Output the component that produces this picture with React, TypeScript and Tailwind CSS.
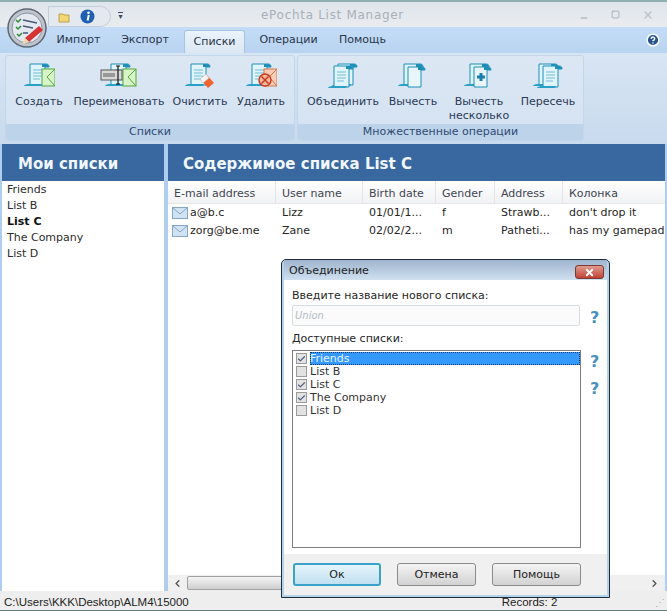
import { Check, X, Minus, Square, HelpCircle, ChevronLeft, ChevronRight } from "lucide-react";

const tabs = [
  { name: "Импорт", width: "w-[63px]" },
  { name: "Экспорт", width: "w-[70px]" },
  { name: "Списки", width: "ml-[4px] mr-[3px] w-[61px]", active: true },
  { name: "Операции", width: "w-[81px]" },
  { name: "Помощь", width: "w-[67px]" },
];
const myLists = ["Friends", "List B", "List C", "The Company", "List D"];
const columns = ["E-mail address", "User name", "Birth date", "Gender", "Address", "Колонка"];
const rows = [
  ["a@b.c", "Lizz", "01/01/1...", "f", "Strawb...", "don't drop it"],
  ["zorg@be.me", "Zane", "02/02/2...", "m", "Patheti...", "has my gamepad"],
];
const dialogLists = [
  { name: "Friends", on: true },
  { name: "List B", on: false },
  { name: "List C", on: true },
  { name: "The Company", on: true },
  { name: "List D", on: false },
];

function Scroll({ x = 0, y = 0, lines = true }: { x?: number; y?: number; lines?: boolean }) {
  return (
    <g transform={`translate(${x} ${y})`}>
      <path d="M7 2h16c2 0 3 1 3 3h-4v18H7z" fill="#dff4fb" stroke="#1f8fb8" strokeWidth="1" />
      <path d="M1 24h17c1 0 2-1 2-2H5c-2 0-4 1-4 2z" fill="#2aa0c8" />
      <path d="M19 2h4c2 0 3 1 3 3h-7z" fill="#1f8fb8" />
      {lines && <path d="M10 8h9M10 11h9M10 14h9M10 17h7" stroke="#74bcd4" strokeWidth="1" />}
    </g>
  );
}

function Envelope({ fill = "#d8f3c8", stroke = "#52a83c" }: { fill?: string; stroke?: string }) {
  return (
    <g>
      <rect x="19" y="7" width="13" height="17" fill={fill} stroke={stroke} />
      <path d="M32 7l-8 8 8 9" fill="none" stroke={stroke} />
    </g>
  );
}

function RibbonIcon({ kind }: { kind: string }) {
  const wide = kind === "rename";
  return (
    <svg width={wide ? 38 : 32} height="28" viewBox={wide ? "0 0 38 28" : "0 0 32 28"}>
      {kind === "create" && (
        <>
          <Scroll />
          <Envelope />
        </>
      )}
      {kind === "rename" && (
        <>
          <Scroll x={4} />
          <g transform="translate(4 0)">
            <Envelope />
          </g>
          <rect x="1" y="8" width="21" height="10" fill="#d8d8d8" stroke="#555" />
          <rect x="3" y="11" width="12" height="4" fill="#999" />
          <path d="M16 4h4M18 4v18M16 22h4" stroke="#111" strokeWidth="1.2" fill="none" />
        </>
      )}
      {kind === "clear" && (
        <>
          <Scroll />
          <path d="M16 17l6-5 8 9-6 5z" fill="#f0622e" />
          <path d="M16 17l6-5 3 4-6 5z" fill="#f4f4f4" stroke="#bbb" strokeWidth="0.5" />
        </>
      )}
      {kind === "delete" && (
        <>
          <Scroll />
          <Envelope fill="#f8cdb8" stroke="#d8744a" />
          <circle cx="20" cy="18" r="6" fill="#f3b9a0" stroke="#c83c1e" strokeWidth="1.5" />
          <path d="M16.5 14.5l7 7M23.5 14.5l-7 7" stroke="#c83c1e" strokeWidth="1.5" />
        </>
      )}
      {kind === "union" && (
        <>
          <Scroll x={4} lines={false} />
          <Scroll y={2} />
        </>
      )}
      {kind === "minus" && (
        <>
          <Scroll lines={false} />
          <path d="M11 5h14c2 0 3 1 3 3h-4v17H11z" fill="#e8f6fb" stroke="#1f8fb8" />
          <path d="M21 5h4c2 0 3 1 3 3h-7z" fill="#1f8fb8" />
        </>
      )}
      {kind === "minusMany" && (
        <>
          <Scroll lines={false} />
          <path d="M11 5h14c2 0 3 1 3 3h-4v17H11z" fill="#e8f6fb" stroke="#1f8fb8" />
          <path d="M21 5h4c2 0 3 1 3 3h-7z" fill="#1f8fb8" />
          <path d="M14 15h8M18 11v8" stroke="#1c7fb0" strokeWidth="3" />
        </>
      )}
      {kind === "intersect" && (
        <>
          <Scroll lines={false} />
          <Scroll x={4} y={2} />
        </>
      )}
    </svg>
  );
}

function RibbonButton({ kind, label, width }: { kind: string; label: string; width: string }) {
  return (
    <div className={`flex shrink-0 flex-col items-center pt-[6px] text-center leading-[14px] ${width}`}>
      <RibbonIcon kind={kind} />
      <div className="mt-[5px] whitespace-pre-line">{label}</div>
    </div>
  );
}

function RibbonGroup({ title, width, children }: { title: string; width: string; children: React.ReactNode }) {
  return (
    <div className={`flex h-[86px] shrink-0 flex-col overflow-hidden rounded-[3px] border border-[#c3d6ea] bg-gradient-to-b from-[#dce7f3] to-[#d3e2f2] ${width}`}>
      <div className="flex h-[68px] items-start">{children}</div>
      <div className="flex h-[16px] items-center justify-center bg-[#bdd3ea] pt-[1px] text-[#2f4a72]">{title}</div>
    </div>
  );
}

function AppOrb() {
  return (
    <svg width="40" height="40" viewBox="0 0 40 40" className="absolute left-[7px] top-[8px]">
      <circle cx="20" cy="20" r="19" fill="#bfc4cc" stroke="#5f6876" strokeWidth="1.5" />
      <circle cx="20" cy="20" r="15" fill="#e4e8f0" stroke="#8d96a4" />
      <path d="M9 12l2 2 3-3M9 19l2 2 3-3M10 26l2 2 3-3" stroke="#2f8a3a" strokeWidth="1.5" fill="none" />
      <path d="M16 12l14 3M16 18l10 2M16 25h5" stroke="#4a5a78" strokeWidth="1.5" />
      <path d="M18 30l14-12 4 4-14 12z" fill="#d43434" />
      <path d="M18 30l-3 6 7-2z" fill="#f0d8b0" />
    </svg>
  );
}

function HelpMark() {
  return <span className="block h-[16px] text-[16px] font-bold leading-[16px] text-[#4a90bd]">?</span>;
}

function Dialog() {
  return (
    <div className="absolute left-[281px] top-[259px] flex h-[339px] w-[329px] flex-col rounded-t-[5px] border border-[#1f2d3a] bg-[#b4d2ea] px-[2px] pb-[2px]">
      <div className="flex h-[20px] shrink-0 items-center justify-between bg-gradient-to-b from-[#9fb4ce] to-[#cfe0f0] pl-[5px] pt-[2px] text-[#1e1e1e]">
        <span className="text-[11px]">Объединение</span>
        <div className="mr-[3px] mt-[2px] flex h-[14px] w-[29px] items-center justify-center rounded-[3px] border border-[#7a3a34] bg-gradient-to-b from-[#e09a90] to-[#bf4034]">
          <X size={11} strokeWidth={4} className="text-white" />
        </div>
      </div>
      <div className="flex min-h-0 flex-1 flex-col bg-[#f0f0f0]">
        <div className="flex-1 bg-white px-[8px] pt-[9px]">
          <div className="h-[14px] leading-[14px]">Введите название нового списка:</div>
          <div className="mt-[2px] flex items-center gap-[10px]">
            <div className="flex h-[21px] w-[288px] shrink-0 items-center rounded-[2px] border border-[#d8dde2] bg-[#fbfbfb] pl-[2px] text-[10px] italic text-[#b6bcc4]">Union</div>
            <div className="pt-[4px]">
              <HelpMark />
            </div>
          </div>
          <div className="mt-[6px] h-[14px] leading-[14px]">Доступные списки:</div>
          <div className="mt-[4px] flex gap-[9px]">
            <div className="h-[198px] w-[289px] shrink-0 border border-[#7e7e7e] bg-white pl-[1px] pt-[1px] leading-[13px]">
              {dialogLists.map((item, i) => (
                <div key={item.name} className="flex h-[13px] items-center">
                  <span className="ml-[2px] mr-[3px] flex h-[11px] w-[11px] shrink-0 items-center justify-center border border-[#9a9a9a] bg-[#e2e2e2]">
                    {item.on && <Check size={10} strokeWidth={3} className="text-[#4a5a78]" />}
                  </span>
                  <span className={i === 0 ? "h-[13px] flex-1 bg-[#3399ff] text-[#e8f4ff] outline-1 -outline-offset-1 outline-dotted outline-[#0b3a6a]" : "text-[#333]"}>
                    {item.name}
                  </span>
                </div>
              ))}
            </div>
            <div className="flex flex-col pt-[4px]">
              <HelpMark />
              <div className="mt-[11px]">
                <HelpMark />
              </div>
            </div>
          </div>
        </div>
        <div className="flex h-[41px] shrink-0 items-start gap-[16px] bg-[#f0f0f0] pl-[9px] pt-[9px]">
          <button className="h-[23px] w-[88px] rounded-[3px] border-2 border-[#3aa2c8] bg-gradient-to-b from-[#e6f5fc] to-[#c0e0f0] pt-[2px] text-[#222]">Ок</button>
          <button className="h-[23px] w-[79px] rounded-[3px] border border-[#8a8a8a] bg-gradient-to-b from-[#f4f4f4] to-[#d2d2d2] pt-[2px] text-[#222]">Отмена</button>
          <button className="h-[23px] w-[89px] rounded-[3px] border border-[#8a8a8a] bg-gradient-to-b from-[#f4f4f4] to-[#d2d2d2] pt-[2px] text-[#222]">Помощь</button>
        </div>
      </div>
    </div>
  );
}

export default function App() {
  return (
    <div className="relative flex h-[611px] w-[667px] flex-col overflow-hidden bg-[#aecdef] font-['DejaVu_Sans',sans-serif] text-[11px] text-[#262626]">
      <div className="flex h-[27px] shrink-0 items-center border-t-2 border-[#8fb0b0] bg-gradient-to-b from-[#dfe5ec] to-[#e9ecef]">
        <div className="ml-[48px] mt-[4px] flex h-[21px] w-[63px] items-center gap-[9px] rounded-r-full border border-[#c2cedb] bg-[#e4e9f0] pl-[9px]">
          <svg width="13" height="12" viewBox="0 0 13 12">
            <path d="M1 3h4l1 1h5v7H1z" fill="#f2d774" stroke="#b08f32" strokeWidth="0.8" />
          </svg>
          <svg width="15" height="15" viewBox="0 0 15 15">
            <circle cx="7.5" cy="7.5" r="7" fill="#1f5fb0" />
            <circle cx="8.5" cy="3.8" r="1.3" fill="#fff" />
            <path d="M8.8 6L7.6 11.5" stroke="#fff" strokeWidth="2" />
          </svg>
        </div>
        <div className="ml-[6px] mt-[3px] flex w-[7px] flex-col items-center">
          <div className="h-px w-[5px] bg-[#3a4a60]" />
          <span className="text-[8px] leading-[8px] text-[#3a4a60]">▾</span>
        </div>
        <div className="flex-1 pr-[38px] text-center text-[12px] tracking-[0.7px] text-[#a9b0b8]">ePochta List Manager</div>
        <div className="mr-[13px] flex items-center gap-[22px] text-[#9aa6b0]">
          <Minus size={10} strokeWidth={2.5} className="mt-[6px]" />
          <Square size={9} strokeWidth={2} />
          <X size={12} strokeWidth={2.5} className="text-[#b8c0c8]" />
        </div>
      </div>

      <div className="flex h-[26px] shrink-0 items-end justify-between bg-gradient-to-b from-[#c4dcf7] to-[#b9d3f0] pl-[47px] pr-[7px]">
        <div className="flex h-[25px] items-center text-[#27354a]">
          {tabs.map((tab) => (
            <div
              key={tab.name}
              className={
                tab.active
                  ? `flex h-[23px] items-center justify-center self-end rounded-t-[3px] border border-b-0 border-[#a5c4e2] bg-gradient-to-b from-[#eaf3fb] to-[#dce7f3] ${tab.width}`
                  : `text-center ${tab.width}`
              }
            >
              {tab.name}
            </div>
          ))}
        </div>
        <HelpCircle size={14} fill="#27548f" strokeWidth={2.5} className="mb-[6px] text-white" />
      </div>

      <div className="flex h-[91px] shrink-0 gap-[2px] bg-gradient-to-b from-[#d8e5f3] to-[#c8daee] pl-[5px] pt-[2px] text-[#2b3a55]">
        <RibbonGroup title="Списки" width="w-[290px]">
          <RibbonButton kind="create" label="Создать" width="w-[66px]" />
          <RibbonButton kind="rename" label="Переименовать" width="w-[94px]" />
          <RibbonButton kind="clear" label="Очистить" width="w-[68px]" />
          <RibbonButton kind="delete" label="Удалить" width="w-[54px]" />
        </RibbonGroup>
        <RibbonGroup title="Множественные операции" width="w-[287px]">
          <RibbonButton kind="union" label="Объединить" width="w-[90px]" />
          <RibbonButton kind="minus" label="Вычесть" width="w-[50px]" />
          <RibbonButton kind="minusMany" label={"Вычесть\nнесколько"} width="w-[82px]" />
          <RibbonButton kind="intersect" label="Пересечь" width="w-[56px]" />
        </RibbonGroup>
      </div>

      <div className="flex min-h-0 flex-1 gap-[4px] px-[2px]">
        <div className="flex w-[162px] shrink-0 flex-col bg-white">
          <div className="flex h-[37px] shrink-0 items-center bg-[#38689f] pl-[16px] pt-[3px] text-[15px] font-bold text-[#f0f6fc]">Мои списки</div>
          <div className="pl-[5px] pt-[1px] text-[#2c2c2c]">
            {myLists.map((name) => (
              <div key={name} className={name === "List C" ? "h-[16px] font-bold leading-[16px] text-[#111]" : "h-[16px] leading-[16px]"}>
                {name}
              </div>
            ))}
          </div>
        </div>

        <div className="flex min-w-0 flex-1 flex-col overflow-hidden bg-white">
          <div className="flex h-[37px] shrink-0 items-center bg-[#38689f] pl-[15px] pt-[3px] text-[15px] font-bold text-[#f0f6fc]">Содержимое списка List C</div>
          <div className="grid h-[23px] shrink-0 grid-cols-[108px_87px_73px_59px_68px_1fr] border-b border-[#e6e6e6] bg-gradient-to-b from-white to-[#f1f2f4] text-[#3e4652]">
            {columns.map((col) => (
              <div key={col} className="flex items-center border-r border-[#e4e4e4] pl-[6px] pt-[4px] last:border-r-0">{col}</div>
            ))}
          </div>
          <div className="min-h-0 flex-1">
            {rows.map((row) => (
              <div key={row[0]} className="grid h-[18px] grid-cols-[108px_87px_73px_59px_68px_1fr] items-center">
                {row.map((cell, i) => (
                  <div key={i} className={i === 0 ? "flex items-center gap-[2px] pl-[4px]" : "overflow-hidden whitespace-nowrap pl-[6px]"}>
                    {i === 0 && (
                      <svg width="16" height="12" viewBox="0 0 16 12">
                        <rect x="0.5" y="0.5" width="15" height="11" fill="#cfe3f5" stroke="#86a6c4" />
                        <path d="M1 1l7 6 7-6" fill="none" stroke="#86a6c4" />
                      </svg>
                    )}
                    {cell}
                  </div>
                ))}
              </div>
            ))}
          </div>
          <div className="flex h-[16px] shrink-0 items-center bg-[#f0f0f0]">
            <ChevronLeft size={11} strokeWidth={3} className="mx-[4px] text-[#555]" />
            <div className="h-[14px] w-[400px] rounded-[2px] border border-[#a0a0a0] bg-gradient-to-b from-[#f4f4f4] to-[#cfcfcf]" />
            <ChevronRight size={11} strokeWidth={3} className="ml-auto mr-[5px] text-[#555]" />
          </div>
        </div>
      </div>

      <div className="flex h-[20px] shrink-0 items-center border-b border-[#5d7f7f] bg-[#eeeeee] pt-[4px] font-['Liberation_Sans',sans-serif] text-[11.5px] text-[#222]">
        <span className="pl-[4px]">C:\Users\KKK\Desktop\ALM4\15000</span>
        <span className="ml-[313px]">Records: 2</span>
        <span className="ml-auto pr-[2px] text-[10px] leading-none text-[#aaa]">⋰</span>
      </div>

      <AppOrb />
      <Dialog />
    </div>
  );
}
